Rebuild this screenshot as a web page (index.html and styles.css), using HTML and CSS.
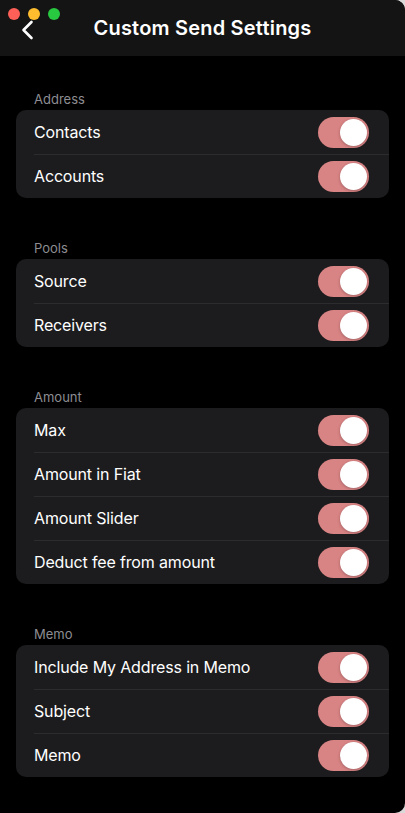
FILE: index.html
```html
<!DOCTYPE html>
<html>
<head>
<meta charset="utf-8">
<link rel="stylesheet" href="styles.css">
</head>
<body>
<div class="window">
  <header class="titlebar">
    <div class="lights">
      <span class="light red"></span>
      <span class="light yellow"></span>
      <span class="light green"></span>
    </div>
    <svg class="back" width="14" height="20" viewBox="0 0 14 20"><path d="M10.5 2 L2.5 10 L10.5 18" fill="none" stroke="#fff" stroke-width="2.6" stroke-linecap="round" stroke-linejoin="round"/></svg>
    <h1 class="title">Custom Send Settings</h1>
  </header>
  <main class="content">
    <section class="section first">
      <div class="label">Address</div>
      <div class="card">
        <div class="row"><span>Contacts</span><span class="toggle"></span></div>
        <div class="row"><span>Accounts</span><span class="toggle"></span></div>
      </div>
    </section>
    <section class="section">
      <div class="label">Pools</div>
      <div class="card">
        <div class="row"><span>Source</span><span class="toggle"></span></div>
        <div class="row"><span>Receivers</span><span class="toggle"></span></div>
      </div>
    </section>
    <section class="section">
      <div class="label">Amount</div>
      <div class="card">
        <div class="row"><span>Max</span><span class="toggle"></span></div>
        <div class="row"><span>Amount in Fiat</span><span class="toggle"></span></div>
        <div class="row"><span>Amount Slider</span><span class="toggle"></span></div>
        <div class="row"><span>Deduct fee from amount</span><span class="toggle"></span></div>
      </div>
    </section>
    <section class="section">
      <div class="label">Memo</div>
      <div class="card">
        <div class="row"><span>Include My Address in Memo</span><span class="toggle"></span></div>
        <div class="row"><span>Subject</span><span class="toggle"></span></div>
        <div class="row"><span>Memo</span><span class="toggle"></span></div>
      </div>
    </section>
  </main>
</div>
</body>
</html>
```
FILE: styles.css
```css
html, body {
  margin: 0;
  padding: 0;
  background: #d9d9d9;
}
body {
  font-family: Inter, "Liberation Sans", sans-serif;
  color: #fff;
}
.window {
  width: 405px;
  height: 813px;
  background: #000;
  border-top-right-radius: 10px;
  border-bottom-right-radius: 10px;
  overflow: hidden;
  display: flex;
  flex-direction: column;
}
.titlebar {
  position: relative;
  height: 56px;
  background: #141414;
  display: flex;
  align-items: center;
  justify-content: center;
  flex-shrink: 0;
}
.lights {
  position: absolute;
  left: 8px;
  top: 8px;
  display: flex;
  gap: 8px;
}
.light {
  width: 12px;
  height: 12px;
  border-radius: 50%;
}
.red { background: #fe5f57; }
.yellow { background: #febc2e; }
.green { background: #28c840; }
.back {
  position: absolute;
  left: 21px;
  top: 20px;
}
.title {
  margin: 0;
  font-size: 20px;
  font-weight: 600;
  letter-spacing: 0.2px;
}
.content {
  padding: 0 16px;
}
.section {
  padding-top: 42px;
}
.section.first {
  padding-top: 35px;
}
.label {
  font-size: 13px;
  line-height: 16px;
  color: #8d8d92;
  padding-left: 18px;
  margin-bottom: 3px;
}
.card {
  background: #1c1c1e;
  border-radius: 10px;
  padding-left: 18px;
}
.row {
  position: relative;
  height: 44px;
  display: flex;
  align-items: center;
  justify-content: space-between;
  padding-right: 20px;
  font-size: 16px;
  letter-spacing: -0.15px;
}
.row + .row::before {
  content: "";
  position: absolute;
  left: 0;
  right: 0;
  top: -0.5px;
  height: 1px;
  background: #2c2c2e;
}
.toggle {
  width: 51px;
  height: 31px;
  border-radius: 16px;
  background: #d88384;
  position: relative;
  flex-shrink: 0;
}
.toggle::after {
  content: "";
  position: absolute;
  right: 2px;
  top: 2px;
  width: 27px;
  height: 27px;
  border-radius: 50%;
  background: #fff;
  box-shadow: 0 1px 3px rgba(0,0,0,0.25);
}
```
